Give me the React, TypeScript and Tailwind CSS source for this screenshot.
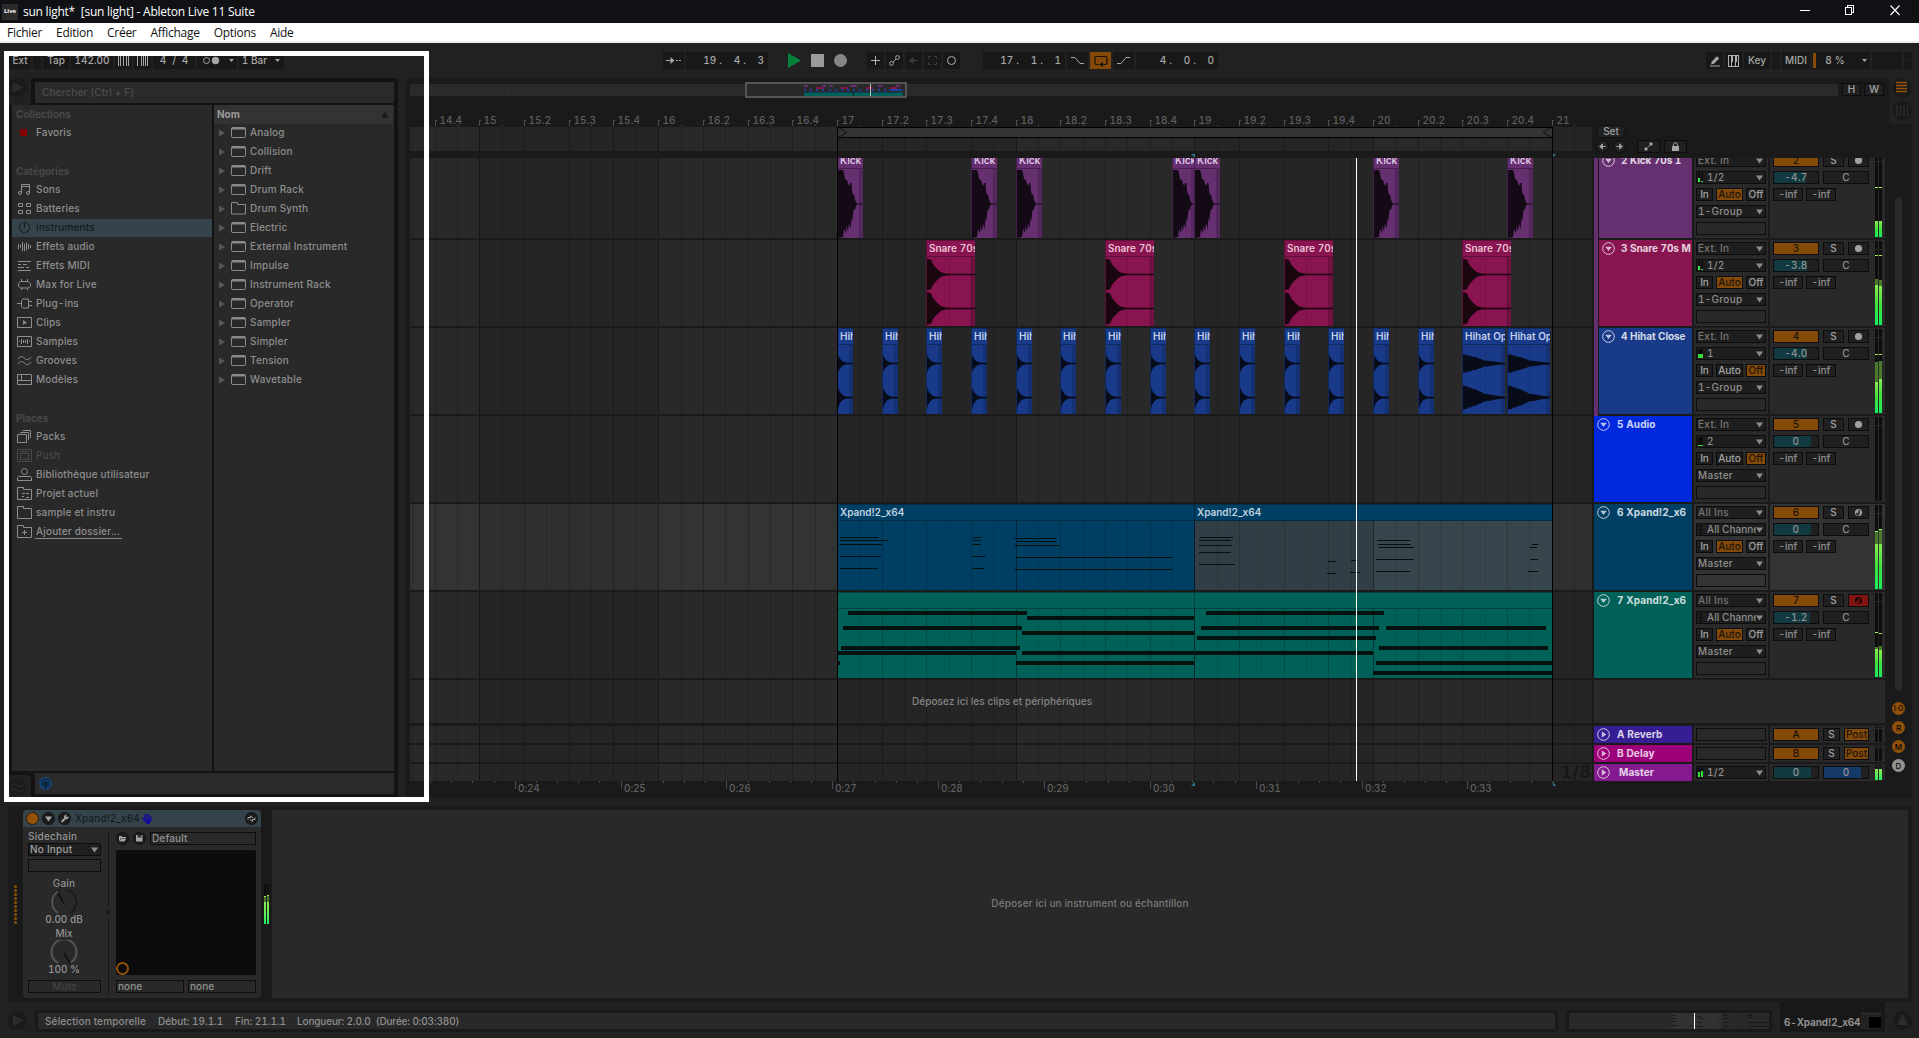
import React from "react";

/* ---------- timeline geometry (pixels inside the lane area) ---------- */
const ORIGIN = 427.4;
const BEAT = 44.68;
const beatX = (b: number) => Math.floor(ORIGIN + b * BEAT);
const LANE_W = 1182;

const halfBeats = Array.from({ length: 72 }, (_, i) => i - 19);

function GridLines({ from = 0, to = LANE_W, strong = false }: { from?: number; to?: number; strong?: boolean }) {
  return (
    <>
      {halfBeats
        .map((n) => ({ n, x: beatX(n / 2) }))
        .filter(({ x }) => x > from && x < to)
        .map(({ n, x }) => (
          <div
            key={n}
            className={`absolute top-0 bottom-0 w-px ${
              n % 8 === 0 ? "bg-black/40" : n % 2 === 0 ? (strong ? "bg-black/20" : "bg-black/25") : strong ? "bg-black/10" : "bg-black/15"
            }`}
            style={{ left: x - from }}
          />
        ))}
    </>
  );
}

function Lane({ children, selected = false, className = "" }: { children?: React.ReactNode; selected?: boolean; className?: string }) {
  return (
    <div className={`relative w-[1182px] shrink-0 overflow-hidden ${selected ? "bg-[#333333]" : "bg-[#292929]"} ${className}`}>
      {[-8, 0, 8, 16].map((b) => (
        <div
          key={b}
          className={`absolute top-0 bottom-0 ${selected ? "bg-[#2f2f2f]" : "bg-[#252525]"}`}
          style={{ left: beatX(b), width: 179 }}
        />
      ))}
      <GridLines />
      {children}
    </div>
  );
}

/* ---------- clips ---------- */
type Pt = [number, number];
const mirror = (pts: Pt[], c: number, amp = 1) =>
  [...pts.map(([x, y]) => `${x},${c - y * amp}`), ...[...pts].reverse().map(([x, y]) => `${x},${c + 0.5 + y * amp}`)].join(" ");

const KICK =
  "0,1 5,1 6,4 7,10 9,11 10,15 11.5,17 12,14 13.5,14 14,22 15,26 16,25 17,31 18,33 19,34.5 26,34.5 26,35.5 19,35.5 18,37 17,41 16,40 15,44 14.5,52 13.5,49 12.5,60 11,54 10,62 8.5,57 8,64 6,60 5,68 0,69";
const SNARE: Pt[] = [[0, 15.5], [4, 14.5], [6, 10], [8, 7.5], [11, 4.5], [14, 2], [18, 1], [22, 0.5], [49, 0.5]];
const HIHAT: Pt[] = [[0, 9.5], [1, 6], [3, 3.5], [5, 1.8], [8, 0.8], [11, 0.5], [16, 0.5]];
const OPEN: Pt[] = [[0, 9], [4, 8.5], [5, 7.5], [8, 7.5], [9, 6.5], [13, 6], [15, 5], [18, 4.2], [21, 2.8], [27, 2.2], [34, 1.2], [43, 0.5]];

type Kind = "kick" | "snare" | "hihat" | "open";
const clipBg: Record<Kind, string> = { kick: "bg-[#652f70]", snare: "bg-[#891550]", hihat: "bg-[#183a88]", open: "bg-[#183a88]" };
const clipText: Record<Kind, string> = { kick: "text-[#dcc4e2]", snare: "text-[#ecc3d6]", hihat: "text-[#c3d0ec]", open: "text-[#c3d0ec]" };
const waveFill: Record<Kind, string> = { kick: "#130a15", snare: "#1a060f", hihat: "#070c18", open: "#070c18" };

function AudioClip({ beat, width, kind, title }: { beat: number; width: number; kind: Kind; title: string }) {
  const x = beatX(beat);
  return (
    <div
      className={`absolute top-0 bottom-0 flex flex-col overflow-hidden border-t border-l border-t-black/25 border-l-black/30 ${clipBg[kind]}`}
      style={{ left: x, width }}
    >
      <div
        className={`h-[16px] shrink-0 overflow-hidden border-b border-black/30 pl-[2px] text-[10px] leading-[15px] font-semibold whitespace-nowrap ${clipText[kind]}`}
      >
        {title}
      </div>
      <div className="relative flex-1 overflow-hidden">
        <GridLines from={x + 1} to={x + width} strong />
        <div className="absolute top-0 right-0 bottom-0 w-[4px] bg-black/15" />
        <svg className="absolute top-0 left-0" width="50" height="70" fill={waveFill[kind]}>
          {kind === "kick" && <polygon points={KICK} />}
          {kind === "snare" && (
            <>
              <polygon points={mirror(SNARE, 17.3)} />
              <polygon points={mirror(SNARE, 51.3, 1.03)} />
            </>
          )}
          {kind === "hihat" && (
            <>
              <polygon points={mirror(HIHAT, 18.3)} />
              <polygon points={mirror(HIHAT, 52.3, 1.15)} />
            </>
          )}
          {kind === "open" && (
            <>
              <polygon points={mirror(OPEN, 18.3)} />
              <polygon points={mirror(OPEN, 52.3, 1.3)} />
            </>
          )}
        </svg>
      </div>
    </div>
  );
}

function MidiClip({ beat, width, header, body, title }: { beat: number; width: number; header: string; body: string; title?: string }) {
  const x = beatX(beat);
  return (
    <div className="absolute top-0 bottom-0 flex flex-col overflow-hidden border-l border-black/30" style={{ left: x, width }}>
      <div
        className={`h-[17px] shrink-0 border-t border-b border-black/30 pl-[2px] text-[10px] leading-[15px] font-semibold tracking-[-0.05px] whitespace-nowrap text-[#c0d4e0] ${header}`}
      >
        {title}
      </div>
      <div className={`relative flex-1 ${body}`}>
        <GridLines from={x + 1} to={x + width} strong />
      </div>
    </div>
  );
}

/* note lists: start, end, vertical centre */
const CHORDS = [
  [43, 123, 142], [43, 144, 151], [41, 131, 163], [43, 129, 199], [43, 123, 235],
  [325, 341, 142], [325, 341, 151], [325, 341, 163], [325, 352, 199], [325, 348, 235],
  [412, 502, 145], [417, 500, 154], [412, 506, 166], [415, 748, 202], [412, 746, 238],
  [806, 875, 142], [804, 871, 151], [804, 873, 166], [804, 871, 187], [802, 879, 223],
  [1076, 1093, 214], [1075, 1093, 250], [1126, 1140, 211], [1123, 1144, 247],
  [1181, 1250, 151], [1183, 1252, 163], [1184, 1259, 172], [1179, 1259, 208], [1179, 1250, 244],
  [1508, 1521, 163], [1505, 1519, 172], [1505, 1521, 208], [1501, 1521, 244],
];
const PADS = [
  [59, 439, 369], [439, 792, 384], [49, 428, 414], [428, 792, 429], [44, 424, 474], [37, 415, 489],
  [427, 792, 489], [415, 792, 519], [37, 42, 519], [818, 1195, 369], [807, 1184, 414], [1199, 1538, 414],
  [799, 1178, 444], [1184, 1543, 474], [795, 1172, 489], [1178, 1553, 519], [1172, 1553, 549],
];

function Notes({ notes, top, thick }: { notes: number[][]; top: number; thick: number }) {
  return (
    <svg
      className="absolute top-0 left-[427px]"
      width="716"
      height="86"
      viewBox={`36 ${top} 1517 258`}
      preserveAspectRatio="none"
      shapeRendering="crispEdges"
      fill="#03110f"
    >
      {notes.map(([a, b, y], i) => (
        <rect key={i} x={a} y={y - thick / 2} width={b - a} height={thick} />
      ))}
    </svg>
  );
}

/* ---------- small controls ---------- */
const Tri = ({ className = "" }: { className?: string }) => (
  <svg className={`shrink-0 ${className}`} width="7" height="6" viewBox="0 0 7 6">
    <path d="M0 0.5h7L3.5 5.5z" fill="#8d8d8d" />
  </svg>
);

const box = "flex h-[13px] items-center border border-[#0c0c0c] text-[10px] leading-[11px] font-medium";

function Drop({ children, meter, gray = false, tight = false }: { children: React.ReactNode; meter?: React.ReactNode; gray?: boolean; tight?: boolean }) {
  return (
    <div
      className={`${box} w-[70px] bg-[#1e1e1e] pr-[2px] pl-[1px] ${tight ? "tracking-[0.05px]" : "tracking-[0.3px]"} ${gray ? "text-[#767676]" : "text-[#8f8f8f]"}`}
    >
      {meter}
      <span className="flex-1 overflow-hidden whitespace-nowrap">{children}</span>
      <Tri />
    </div>
  );
}

const MiniMeter = ({ l, r }: { l: number; r?: number }) => (
  <span className="mr-[4px] flex h-[9px] shrink-0 items-end gap-px">
    <span className={`flex h-full items-end bg-[#0c0c0c] ${r === undefined ? "w-[5px]" : "w-[2px]"}`}>
      <span className="w-full bg-[#35e03c]" style={{ height: l }} />
    </span>
    {r !== undefined && (
      <span className="flex h-full w-[2px] items-end bg-[#0c0c0c]">
        <span className="w-full bg-[#35e03c]" style={{ height: r }} />
      </span>
    )}
  </span>
);

const MidiMeter = () => (
  <span className="mr-[5px] ml-px flex h-[9px] w-[3px] shrink-0 flex-col justify-between">
    <span className="h-[2px] bg-[#0e0e0e]" />
    <span className="h-[2px] bg-[#0e0e0e]" />
    <span className="h-[2px] bg-[#0e0e0e]" />
  </span>
);

function Fold({ open = true }: { open?: boolean }) {
  return (
    <svg className="shrink-0" width="13" height="13" viewBox="0 0 13 13">
      <circle cx="6.5" cy="6.5" r="5.8" fill="none" stroke="#fff" strokeOpacity=".75" />
      <path d={open ? "M3.2 4.8h6.6L6.5 9z" : "M4.8 3.3v6.4L9.2 6.5z"} fill="#fff" fillOpacity=".7" />
    </svg>
  );
}

interface TrackInfo {
  n: string;
  name: string;
  color: string;
  group?: boolean;
  midi?: boolean;
  input: React.ReactNode;
  meter: React.ReactNode;
  mon: "Auto" | "Off";
  out: string;
  vol: string;
  fill: number;
  armed?: boolean;
  levels: { peak: number; dim: number; top: number }[];
}

function Level({ peak, dim, top }: { peak: number; dim: number; top: number }) {
  return (
    <div className="relative h-[84px] w-[3px] bg-[#0d0d0d]">
      <div className="absolute top-[8px] h-px w-full bg-[#2a2a2a]" />
      {dim > 0 && <div className="absolute bottom-0 w-full bg-[#4a7a2c]" style={{ top: dim }} />}
      {top > 0 && <div className="absolute bottom-0 w-full bg-linear-to-b from-[#85ec50] via-[#3ae23c] to-[#0ff05c]" style={{ top }} />}
      {peak > 0 && <div className="absolute h-px w-full bg-[#a6f05a]" style={{ top: peak }} />}
    </div>
  );
}

function Track({ t, selected = false, clipTop = false, children }: { t: TrackInfo; selected?: boolean; clipTop?: boolean; children?: React.ReactNode }) {
  const panel = selected ? "bg-[#333333]" : "bg-[#292929]";
  const on = "bg-[#854a08] text-[#1d1408]";
  const off = "bg-[#1e1e1e] text-[#a4a4a4]";
  return (
    <div className={`flex h-[86px] shrink-0 gap-[2px] ${clipTop ? "-mt-[6px]" : ""}`}>
      <Lane selected={selected}>{children}</Lane>
      <div className="flex w-[98px] gap-px">
        {t.group && <div className="-mb-[2px] w-[4px] bg-[#652f70]" />}
        <div className={`flex flex-1 items-start overflow-hidden pt-[2px] pl-[3px] ${t.color}`}>
          <Fold />
          <span
            className={`text-[10px] leading-[13px] font-bold whitespace-nowrap text-white/80 ${
              t.group ? "ml-[6px] tracking-[-0.08px]" : "ml-[7px] tracking-[0.08px]"
            }`}
          >
            {t.n} {t.name}
          </span>
        </div>
      </div>
      <div className={`flex w-[74px] flex-col gap-[4px] pt-[2px] pl-[2px] ${panel}`}>
        <Drop gray>{t.midi ? "All Ins" : "Ext. In"}</Drop>
        <Drop meter={t.meter} tight={t.midi}>
          {t.input}
        </Drop>
        <div className="flex w-[70px] justify-between">
          <div className={`${box} w-[17px] justify-center ${off}`}>In</div>
          <div className={`${box} w-[27px] justify-center ${t.mon === "Auto" ? on : off}`}>Auto</div>
          <div className={`${box} w-[20px] justify-center ${t.mon === "Off" ? on : off}`}>Off</div>
        </div>
        <Drop>{t.out}</Drop>
        <div className={`${box} w-[70px]`} />
      </div>
      <div className={`flex w-[115px] pl-[3px] ${panel}`}>
        <div className="flex w-[96px] flex-col gap-[4px] pt-[2px] text-[#929292]">
          <div className="flex gap-[4px]">
            <div className={`${box} w-[46px] justify-center ${on}`}>{t.n}</div>
            <div className={`${box} w-[21px] justify-center bg-[#202020] text-[#a4a4a4]`}>S</div>
            <div className={`${box} w-[21px] justify-center ${t.armed ? "bg-[#821313]" : "bg-[#202020]"}`}>
              <svg width="9" height="9" viewBox="0 0 9 9">
                <circle cx="4.5" cy="4.5" r="3.6" fill={t.armed ? "#1a0606" : "#a0a0a0"} />
                {t.midi && (
                  <path d="M5.2 2v4M5 6.2a1.2 1 0 1 1-.2-.8" stroke={t.armed ? "#821313" : "#202020"} strokeWidth="1.2" fill="none" />
                )}
              </svg>
            </div>
          </div>
          <div className="flex gap-[4px]">
            <div className={`${box} relative w-[46px] justify-center bg-[#202020]`}>
              <div className="absolute inset-y-0 left-0 bg-[#113a40]" style={{ width: t.fill }} />
              <span className="relative tracking-[0.3px]">{t.vol}</span>
            </div>
            <div className={`${box} w-[46px] justify-center bg-[#202020]`}>C</div>
          </div>
          <div className="flex gap-[3px]">
            <div className={`${box} w-[30px] justify-center bg-[#202020]`}>-inf</div>
            <div className={`${box} w-[30px] justify-center bg-[#202020]`}>-inf</div>
          </div>
        </div>
        <div className="ml-[6px] flex gap-px pt-px">
          {t.levels.map((l, i) => (
            <Level key={i} {...l} />
          ))}
        </div>
      </div>
    </div>
  );
}

function ReturnRow({ label, name, color, master = false }: { label?: string; name: string; color: string; master?: boolean }) {
  return (
    <div className="flex h-[17px] shrink-0 gap-[2px]">
      <Lane>
        {master && (
          <span className="absolute -top-[2px] right-[1px] text-[17px] leading-[20px] font-bold tracking-[0.5px] text-[#171717]">1/8</span>
        )}
      </Lane>
      <div className={`flex w-[98px] items-center pl-[3px] ${color}`}>
        <Fold open={false} />
        <span className={`text-[10px] font-bold tracking-[0.1px] whitespace-nowrap text-white/80 ${master ? "ml-[9px]" : "ml-[7px]"}`}>{name}</span>
      </div>
      <div className="flex w-[74px] items-center bg-[#292929] pl-[2px]">
        {master ? <Drop meter={<MiniMeter l={5} r={6} />}>1/2</Drop> : <div className={`${box} w-[70px]`} />}
      </div>
      <div className="flex w-[115px] items-center bg-[#292929] pl-[3px]">
        {master ? (
          <div className="flex w-[102px] gap-[4px] text-[#929292]">
            <div className={`${box} relative w-[46px] justify-center bg-[#202020]`}>
              <div className="absolute inset-y-0 left-0 w-[37px] bg-[#113a40]" />
              <span className="relative">0</span>
            </div>
            <div className={`${box} relative w-[46px] justify-center bg-[#202020]`}>
              <div className="absolute inset-y-0 left-0 w-[37px] bg-[#163a68]" />
              <span className="relative">0</span>
            </div>
          </div>
        ) : (
          <div className="flex w-[102px] gap-[4px]">
            <div className={`${box} w-[46px] justify-center bg-[#854a08] text-[#1d1408]`}>{label}</div>
            <div className={`${box} w-[17px] justify-center bg-[#202020] text-[#a4a4a4]`}>S</div>
            <div className={`${box} w-[25px] justify-center overflow-hidden bg-[#854a08] text-[#1d1408]`}>Post</div>
          </div>
        )}
        <div className="flex h-[15px] gap-px">
          {[0, 1].map((i) => (
            <div key={i} className="relative w-[3px] bg-[#0d0d0d]">
              <div className="absolute top-px h-px w-full bg-[#2a2a2a]" />
              {master && <div className="absolute bottom-0 h-[11px] w-full bg-linear-to-b from-[#85ec50] to-[#0ff05c]" />}
            </div>
          ))}
        </div>
      </div>
    </div>
  );
}

/* ---------- top bars ---------- */
const cell = "flex h-[17px] shrink-0 items-center justify-center bg-[#181818] text-[10px] font-medium text-[#a6a6a6]";

function TitleBar() {
  return (
    <div className="flex h-[23px] items-center bg-[#0f1115] text-white">
      <div className="ml-[2px] flex h-[16px] w-[16px] items-center justify-center bg-[#2b2b2b] font-['Open_Sans'] text-[6px] font-bold">Live</div>
      <span className="ml-[5px] font-['Open_Sans'] text-[12px] leading-[23px] tracking-[-0.24px] whitespace-pre">
        {"sun light*  [sun light] - Ableton Live 11 Suite"}
      </span>
      <svg className="ml-auto" width="130" height="23" fill="none" stroke="#fff" shapeRendering="crispEdges">
        <path d="M10.500 10.500h10" />
        <path d="M56.500 7.500h6v7h-6zM58.500 7V5.500h6v7h-2" />
        <path d="M101.500 5.500l9 9.500M110.500 5.500l-9 9.500" shapeRendering="auto" strokeWidth="1.100" />
      </svg>
    </div>
  );
}

function MenuBar() {
  return (
    <div className="flex h-[20px] items-center gap-[14px] border-b-2 border-[#eeeeee] bg-white pl-[7px] font-['Open_Sans'] text-[12px] tracking-[-0.28px] text-[#111]">
      {["Fichier", "Edition", "Créer", "Affichage", "Options", "Aide"].map((m) => (
        <span key={m} className="pt-px">
          {m}
        </span>
      ))}
    </div>
  );
}

const Pos = ({ a, b, c }: { a: string; b: string; c: string }) => (
  <div className={`${cell} w-[82px] !justify-end pr-[4px] tracking-[0.1px]`}>
    <span className="whitespace-pre">{a} .</span>
    <span className="w-[24px] text-right whitespace-pre">{b} .</span>
    <span className="w-[18px] text-right">{c}</span>
  </div>
);

function Toolbar() {
  return (
    <div className="flex h-[35px] items-start pt-[9px]">
      <div className="flex gap-[2px] pl-[9px]">
        <div className={`${cell} w-[22px]`}>Ext</div>
        <div className={`${cell} w-[8px]`} />
        <div className={`${cell} w-[26px]`}>Tap</div>
        <div className={`${cell} w-[42px]`}>142.00</div>
        <div className={`${cell} w-[17px]`}>
          <svg width="11" height="11" stroke="#a6a6a6" shapeRendering="crispEdges">
            <path d="M.5 0v11M2.500 0v11M5.500 0v11M8.500 0v11M10.500 0v11" />
          </svg>
        </div>
        <div className={`${cell} w-[17px]`}>
          <svg width="11" height="11" stroke="#a6a6a6" shapeRendering="crispEdges">
            <path d="M.5 0v11M4.500 0v11M6.500 0v11M8.500 0v11M10.500 0v11" />
          </svg>
        </div>
        <div className={`${cell} w-[42px] gap-[6px]`}>
          <span>4</span>
          <span>/</span>
          <span>4</span>
        </div>
        <div className={`${cell} w-[40px] !justify-start pl-[5px]`}>
          <svg width="34" height="9">
            <circle cx="4.500" cy="4.500" r="3" fill="none" stroke="#a6a6a6" />
            <circle cx="13.500" cy="4.500" r="3.700" fill="#a6a6a6" />
            <path d="M27 3h5l-2.500 3z" fill="#a6a6a6" />
          </svg>
        </div>
        <div className={`${cell} w-[45px] gap-[8px]`}>
          <span>1 Bar</span>
          <svg width="6" height="4">
            <path d="M0 0h5L2.500 3z" fill="#a6a6a6" />
          </svg>
        </div>
      </div>

      <div className="ml-[379px] flex gap-[2px]">
        <div className={`${cell} w-[21px]`}>
          <svg width="15" height="9" stroke="#a6a6a6" fill="#a6a6a6">
            <path d="M0 4.500h8M10 4.500h2M13 4.500h2" />
            <path d="M4.500 1v7l4-3.500z" stroke="none" />
          </svg>
        </div>
        <Pos a="19" b="4" c="3" />
        <svg className="ml-[17px]" width="66" height="17">
          <path d="M1 1v15l13-7.500z" fill="#07803c" />
          <rect x="24" y="2" width="13" height="13" fill="#9b9b9b" />
          <circle cx="53.500" cy="8.500" r="6.500" fill="#868686" />
        </svg>
        <div className={`${cell} ml-[12px] w-[17px]`}>
          <svg width="9" height="9" stroke="#b0b0b0" shapeRendering="crispEdges">
            <path d="M4.500 0v9M0 4.500h9" />
          </svg>
        </div>
        <div className={`${cell} w-[17px]`}>
          <svg width="11" height="11" stroke="#a6a6a6" fill="none">
            <circle cx="2.500" cy="8.500" r="1.900" />
            <circle cx="8.500" cy="2.500" r="1.900" />
            <path d="M4 7l3-3" />
          </svg>
        </div>
        <div className={`${cell} w-[17px]`}>
          <svg width="9" height="9" stroke="#3e3e3e" fill="#3e3e3e">
            <path d="M0 4.500L4.500 1v7z" stroke="none" />
            <path d="M3 4.500h6" />
          </svg>
        </div>
        <div className={`${cell} w-[17px]`}>
          <svg width="9" height="9" stroke="#3e3e3e" fill="none">
            <path d="M.5 3V.5H3M6 .5h2.500V3M8.500 6v2.500H6M3 8.500H.5V6" />
          </svg>
        </div>
        <div className={`${cell} w-[17px]`}>
          <svg width="11" height="11" stroke="#b0b0b0" fill="none">
            <circle cx="5.500" cy="5.500" r="4" />
          </svg>
        </div>
        <div className="w-[19px]" />
        <Pos a="17" b="1" c="1" />
        <div className={`${cell} w-[21px]`}>
          <svg width="13" height="9" stroke="#a6a6a6" fill="none">
            <path d="M0 1.500h4l5 6h4" />
          </svg>
        </div>
        <div className={`${cell} w-[21px] !bg-[#854a08]`}>
          <svg width="14" height="12" stroke="#1a1208" fill="none" strokeWidth="1.200">
            <path d="M4.500 9.500H2.500a1.500 1.500 0 0 1-1.500-1.500V3a1.500 1.500 0 0 1 1.500-1.500h9A1.500 1.500 0 0 1 13 3v5a1.500 1.500 0 0 1-1.500 1.500H8" />
            <path d="M5 9.500L9 7v5z" fill="#1a1208" stroke="none" />
          </svg>
        </div>
        <div className={`${cell} w-[21px]`}>
          <svg width="13" height="9" stroke="#a6a6a6" fill="none">
            <path d="M0 7.500h4l5-6h4" />
          </svg>
        </div>
        <Pos a="4" b="0" c="0" />
      </div>

      <div className="ml-[488px] flex gap-[2px]">
        <div className={`${cell} w-[17px]`}>
          <svg width="12" height="12" fill="#a6a6a6">
            <path d="M2 9.500l.8-3L8 1.200 10.200 3.400 5 8.700z" />
            <rect x="1" y="10.500" width="10" height="1" />
          </svg>
        </div>
        <div className={`${cell} w-[17px]`}>
          <svg width="11" height="12" shapeRendering="crispEdges">
            <rect x=".5" y=".5" width="10" height="11" fill="none" stroke="#b0b0b0" />
            <path d="M3.500 7v4M7.500 7v4" stroke="#b0b0b0" />
            <path d="M3.500 1v6M7.500 1v6" stroke="#b0b0b0" strokeWidth="2" />
          </svg>
        </div>
        <div className={`${cell} w-[26px]`}>Key</div>
        <div className="flex h-[17px] w-[8px] flex-col gap-px">
          <div className="flex-1 bg-[#181818]" />
          <div className="flex-1 bg-[#181818]" />
        </div>
        <div className={`${cell} w-[28px]`}>MIDI</div>
        <div className={`${cell} relative w-[58px]`}>
          <div className="absolute inset-y-px left-px w-[3px] bg-[#854a08]" />
          <span className="mr-[12px] tracking-[0.2px]">8 %</span>
          <svg className="absolute right-[2px]" width="6" height="4">
            <path d="M0 0h5L2.500 3z" fill="#a6a6a6" />
          </svg>
        </div>
        <div className={`${cell} w-[30px]`} />
        <div className="flex h-[17px] w-[8px] flex-col gap-px">
          <div className="flex-1 bg-[#181818]" />
          <div className="flex-1 bg-[#181818]" />
        </div>
      </div>
    </div>
  );
}

/* ---------- browser ---------- */
const icons: Record<string, React.ReactNode> = {
  Sons: <path d="M4.500 10V1.500h8V10M4.500 3.500h8M4.500 10a1.500 1.500 0 1 1-3 0 1.500 1.500 0 0 1 3 0zM12.500 10a1.500 1.500 0 1 1-3 0 1.500 1.500 0 0 1 3 0z" />,
  Batteries: <path d="M1.500 1.500h4v3h-4zM9.500 1.500h4v3h-4zM1.500 8.500h4v3h-4zM9.500 8.500h4v3h-4z" />,
  Instruments: <path d="M7.500 1v5.500M7.500 1.500a5 5 0 1 1-.01 0" />,
  "Effets audio": <path d="M1.500 4v5M3.500 4.500v3M5.500 2v9M7.500 4v7M9.500 2.500v8M11.500 4v5M13.500 5v3" />,
  "Effets MIDI": <path d="M1 2.500h13M1 5.500h3M6 5.500h4M1 8.500h6M9 8.500h3M1 11.500h13" />,
  "Max for Live": <path d="M1 6.500h1M13 6.500h1M4.500 1v2M10.500 1v2M4.500 10v2M10.500 10v2M3.500 3.500h8l2 2v2.500l-2 2h-8l-2-2V5.500z" />,
  "Plug-ins": <path d="M0 6.500h4M4.500 3.500l1.500-1.500h5.500v9H6L4.500 9.500zM11.500 4.500H15M11.500 8.500H15" />,
  Clips: (
    <>
      <path d="M.5 1.500h14v10H.5z" />
      <path d="M6 4v5l4-2.500z" fill="#8a8a8a" stroke="none" />
    </>
  ),
  Samples: <path d="M.5 1.500h14v10H.5zM2.500 6v1M4.500 4v5M6.500 5v3M8.500 5v3M10.500 4v5M12.500 6v1" />,
  Grooves: <path d="M1 5c2-3 4-3 6.500-.8S12 6 14 3M1 10c2-3 4-3 6.500-.8S12 11 14 8" />,
  Modèles: <path d="M.5 1.500h14v10H.5zM.5 7.500h14M4.500 1.500v6" />,
  Packs: <path d="M.5 4.500h9v8h-9zM3 2.500h8.500V10M5.500.5h8V8" />,
  Push: <path d="M.5.5h14v12H.5zM3 2.500h9M3.500 4.500h8v6h-8z" />,
  "Bibliothèque utilisateur": <path d="M7.500 .5a3 3 0 1 1-.01 0M.5 12.500v-3l1-1h12l1 1v3z" />,
  "Projet actuel": <path d="M.5 12.500V.5h6v2h8v10zM5 6.500h3M9 6.500h3M5 9.500h2M9 10.500h3" />,
  "sample et instru": <path d="M.5 12.500V.5h6v2h8v10z" />,
  "Ajouter dossier...": <path d="M.5 12.500V.5h6v2h8v10zM7.500 5v5M5 7.500h5" />,
};

function Category({ name, state = "" }: { name: string; state?: "" | "on" | "off" | "link" }) {
  const color = state === "on" ? "text-[#151c20]" : state === "off" ? "text-[#484848]" : "text-[#8e8e8e]";
  return (
    <div className="flex h-[19px] items-start">
      <div className={`flex h-[18px] w-full items-start pt-[2px] pl-[5px] ${state === "on" ? "bg-[#35444b]" : ""} ${color}`}>
        <svg width="15" height="13" fill="none" stroke="currentColor">
          {icons[name]}
        </svg>
        <span
          className={`ml-[3px] pl-px text-[10px] leading-[13px] font-medium tracking-[0.17px] ${
            state === "link" ? "h-[14px] border-b border-[#8a8a8a] pr-[2px]" : ""
          }`}
        >
          {name}
        </span>
      </div>
    </div>
  );
}

const Heading = ({ children }: { children: React.ReactNode }) => (
  <div className="flex h-[19px] items-start pt-[2px] pl-[4px] text-[10px] leading-[14px] font-semibold tracking-[0.05px] text-[#4a4a4a]">
    {children}
  </div>
);

const instruments = [
  "Analog", "Collision", "Drift", "Drum Rack", "Drum Synth", "Electric", "External Instrument", "Impulse",
  "Instrument Rack", "Operator", "Sampler", "Simpler", "Tension", "Wavetable",
];

function Browser() {
  return (
    <div className="flex h-[720px] w-[389px] flex-col rounded-tr-[4px] bg-[#131313]">
      <div className="flex h-[27px]">
        <div className="flex w-[22px] items-start rounded-br-[4px] bg-[#212121]">
          <svg className="-ml-[1px]" width="20" height="20">
            <circle cx="9" cy="9.500" r="9.500" fill="#1a1a1a" />
            <path d="M4.500 4v11l11-5.500z" fill="#2b2b2b" />
          </svg>
        </div>
        <div className="mt-[4px] ml-[4px] flex h-[21px] w-[359px] items-center bg-[#2a2a2a] pl-[7px] text-[10px] leading-[13px] font-medium tracking-[0.12px] text-[#4d4d4d]">
          Chercher (Ctrl + F)
        </div>
      </div>
      <div className="flex h-[666px] gap-[2px] pl-[3px]">
        <div className="flex w-[200px] flex-col bg-[#292929]">
          <Heading>Collections</Heading>
          <div className="flex h-[19px] items-start pt-[2px] pl-[8px] text-[10px] leading-[13px] font-medium tracking-[0.1px] text-[#8e8e8e]">
            <span className="mt-[3px] mr-[9px] h-[7px] w-[7px] bg-[#850303]" />
            Favoris
          </div>
          <div className="h-[19px]" />
          <Heading>Catégories</Heading>
          {["Sons", "Batteries", "Instruments", "Effets audio", "Effets MIDI", "Max for Live", "Plug-ins", "Clips", "Samples", "Grooves", "Modèles"].map(
            (n) => (
              <Category key={n} name={n} state={n === "Instruments" ? "on" : ""} />
            ),
          )}
          <div className="h-[19px]" />
          <Heading>Places</Heading>
          <Category name="Packs" />
          <Category name="Push" state="off" />
          <Category name="Bibliothèque utilisateur" />
          <Category name="Projet actuel" />
          <Category name="sample et instru" />
          <Category name="Ajouter dossier..." state="link" />
        </div>
        <div className="flex w-[180px] flex-col bg-[#292929]">
          <div className="flex h-[19px] w-[179px] items-center justify-between bg-[#333333] pr-[4px] pl-[3px] text-[10px] font-bold text-[#9b9b9b]">
            Nom
            <svg width="8" height="7">
              <path d="M0 7h8L4 0z" fill="#1c1c1c" />
            </svg>
          </div>
          {instruments.map((n) => (
            <div key={n} className="flex h-[19px] items-start pt-[2px] pl-[5px] text-[10px] leading-[13px] font-medium tracking-[0.2px] text-[#8e8e8e]">
              <svg className="mt-[3px]" width="6" height="8">
                <path d="M0 .5v7l6-3.500z" fill="#565656" />
              </svg>
              <svg className="ml-[6px]" width="15" height="13" fill="none" stroke="#8a8a8a">
                {n === "Drum Synth" ? (
                  <path d="M.5 12V.5h6v2h8V12z" />
                ) : (
                  <>
                    <rect x=".5" y="1.500" width="14" height="10" rx="1" />
                    <path d="M1 2.500h13" strokeWidth="2" />
                  </>
                )}
              </svg>
              <span className="ml-[4px]">{n}</span>
            </div>
          ))}
        </div>
      </div>
      <div className="flex h-[27px]">
        <div className="mt-[4px] flex w-[22px] items-center rounded-tr-[4px] bg-[#212121]">
          <svg className="-ml-[1px]" width="20" height="20">
            <circle cx="9" cy="10.500" r="9" fill="#1b1b1b" />
            <path d="M3 9c2-3 4-2 6-.5s4 2 6-.5M3 14c2-3 4-2 6-.5s4 2 6-.5" fill="none" stroke="#292929" strokeWidth="1.500" />
          </svg>
        </div>
        <div className="mt-[2px] ml-[4px] flex h-[21px] w-[359px] items-center bg-[#2a2a2a] pl-[4px]">
          <svg width="13" height="13">
            <circle cx="6.500" cy="6.500" r="6.500" fill="#134272" />
            <circle cx="6.500" cy="6" r="4" fill="none" stroke="#0c1d30" />
            <path d="M6.500 5v7M5 5h3v3H5z" stroke="#0c1d30" fill="#0c1d30" />
          </svg>
        </div>
      </div>
    </div>
  );
}

/* ---------- arrangement ---------- */
const rulerBeats = Array.from({ length: 26 }, (_, i) => i - 9);
const beatLabel = (b: number) => {
  const bar = 17 + Math.floor(b / 4);
  const beat = ((b % 4) + 4) % 4;
  return beat === 0 ? `${bar}` : `${bar}.${beat + 1}`;
};

function Overview() {
  const s = 6.15;
  return (
    <div className="relative mt-[6px] ml-[4px] h-[12px] w-[1428px] bg-[#2a2a2a]">
      <div className="absolute top-[8px] left-[98px] h-[2px] w-px bg-[#0b4a78]" />
      <div className="absolute -top-[2px] left-[335px] h-[16px] w-[162px] border-2 border-[#555555] bg-[#292929]">
        <svg className="absolute top-0 left-[57px]" width="100" height="12" shapeRendering="crispEdges">
          {[0, 3, 4, 7.5, 8, 12, 15].map((b) => (
            <rect key={b} x={b * s} y="1" width="4" height="2" fill="#652f70" />
          ))}
          {[2, 6, 10, 14].map((b) => (
            <rect key={b} x={b * s} y="3" width="7" height="2" fill="#891550" />
          ))}
          {Array.from({ length: 16 }, (_, b) => (
            <rect key={b} x={b * s} y="5" width={b > 13 ? 6 : 2} height="2" fill="#1c43a0" />
          ))}
          <rect x="0" y="8" width="99" height="2" fill="#0a3f5c" />
          <rect x="0" y="9" width="99" height="3" fill="#006158" />
          <rect x="49" y="7" width="1" height="5" fill="#072a2c" />
          <rect x="66" y="0" width="1" height="12" fill="#c0c0c0" />
        </svg>
      </div>
    </div>
  );
}

function Ruler() {
  return (
    <div className="relative ml-[4px] h-[31px] w-[1182px]">
      {rulerBeats.map((b) => (
        <React.Fragment key={b}>
          <div className="absolute top-[24px] h-[6px] w-[2px] border-t border-l border-[#4e4e4e]" style={{ left: beatX(b) }} />
          <div className="absolute top-[29px] h-px w-px bg-[#4e4e4e]" style={{ left: beatX(b + 0.5) }} />
          <span className="absolute top-[18px] text-[10px] leading-[13px] font-medium tracking-[0.1px] text-[#5f5f5f]" style={{ left: beatX(b) + 4.5 }}>
            {beatLabel(b)}
          </span>
        </React.Fragment>
      ))}
    </div>
  );
}

const tracks: TrackInfo[] = [
  { n: "2", name: "Kick 70s 1", color: "bg-[#652f70]", group: true, input: "1/2", meter: <MiniMeter l={4} r={1} />, mon: "Auto", out: "1-Group", vol: "-4.7", fill: 32, levels: [{ peak: 34, dim: 0, top: 68 }, { peak: 34, dim: 0, top: 68 }] },
  { n: "3", name: "Snare 70s M", color: "bg-[#891550]", group: true, input: "1/2", meter: <MiniMeter l={4} r={1} />, mon: "Auto", out: "1-Group", vol: "-3.8", fill: 33, levels: [{ peak: 14, dim: 38, top: 44 }, { peak: 14, dim: 39, top: 45 }] },
  { n: "4", name: "Hihat Close", color: "bg-[#183a88]", group: true, input: "1", meter: <MiniMeter l={4} />, mon: "Off", out: "1-Group", vol: "-4.0", fill: 33, levels: [{ peak: 25, dim: 33, top: 53 }, { peak: 25, dim: 32, top: 50 }] },
  { n: "5", name: "Audio", color: "bg-[#0029dd]", input: "2", meter: <MiniMeter l={1} />, mon: "Off", out: "Master", vol: "0", fill: 37, levels: [{ peak: 0, dim: 0, top: 0 }, { peak: 0, dim: 0, top: 0 }] },
  { n: "6", name: "Xpand!2_x6", color: "bg-[#003f64]", midi: true, input: "All Channe", meter: <MidiMeter />, mon: "Auto", out: "Master", vol: "0", fill: 37, levels: [{ peak: 26, dim: 27, top: 39 }, { peak: 24, dim: 25, top: 39 }] },
  { n: "7", name: "Xpand!2_x6", color: "bg-[#006158]", midi: true, armed: true, input: "All Channe", meter: <MidiMeter />, mon: "Auto", out: "Master", vol: "-1.2", fill: 36, levels: [{ peak: 39, dim: 54, top: 56 }, { peak: 40, dim: 53, top: 57 }] },
];

function Arrangement() {
  const roundBtn = "flex h-[13px] w-[13px] items-center justify-center rounded-full text-[8px] leading-none font-semibold";
  return (
    <div className="relative flex h-[720px] w-[1506px] shrink-0 flex-col rounded-[4px] bg-[#1a1a1a]">
      <div className="flex h-[18px]">
        <Overview />
        <div className="mt-[5px] ml-[4px] flex gap-[3px] text-[#999]">
          <div className={`${box} w-[19px] justify-center bg-[#202020] !font-semibold`}>H</div>
          <div className={`${box} w-[20px] justify-center bg-[#202020] !font-semibold`}>W</div>
        </div>
      </div>
      <div className="absolute top-0 right-0 flex h-[46px] w-[23px] flex-col items-end rounded-bl-[4px] bg-[#212121]">
        <svg width="20" height="42">
          <circle cx="10" cy="10" r="9.500" fill="#191919" />
          <path d="M4 4.500h11M4 7.500h11M4 10.500h11M4 13.500h11" stroke="#96560f" strokeWidth="1.500" />
          <circle cx="10" cy="32.500" r="9.500" fill="#191919" />
          <path d="M5 27v11M8.500 27v11M12 27v11M15.500 27v11" stroke="#2b2b2b" strokeWidth="1.500" />
        </svg>
      </div>
      <Ruler />

      <div className="relative ml-[4px] h-[671px] w-[1475px]">
        <div className="flex h-[24px] gap-[2px]">
          <Lane className="h-[24px]">
            <div className="absolute top-0 left-[427px] flex h-[11px] w-[716px] items-center justify-between border border-black bg-[#343434]">
              <svg width="10" height="9" fill="none" stroke="#111">
                <path d="M1 0l8 4.500L1 9" />
              </svg>
              <svg width="10" height="9" fill="none" stroke="#111">
                <path d="M9 0L1 4.500 9 9" />
              </svg>
            </div>
          </Lane>
          <div className="flex w-[293px] flex-col gap-[2px] pl-[2px]">
            <div className="-mt-[2px] flex h-[13px] w-[30px] shrink-0 items-center justify-center rounded-full border border-[#0f0f0f] bg-[#222] text-[10px] font-medium text-[#a0a0a0]">
              Set
            </div>
            <div className="flex h-[13px] shrink-0 items-center">
              {["M11 6.500H3M6.500 3L3 6.500 6.500 10z", "M2 6.500h8M6.500 3L10 6.500 6.500 10z"].map((d, i) => (
                <svg key={i} className="mr-[4px]" width="13" height="13">
                  <circle cx="6.500" cy="6.500" r="6" fill="#222" stroke="#0f0f0f" />
                  <path d={d} fill="#a6a6a6" stroke="#a6a6a6" strokeWidth="1.200" transform="translate(1.600 1.600) scale(.75)" />
                </svg>
              ))}
              <div className={`${box} ml-[7px] w-[23px] justify-center bg-[#202020]`}>
                <svg width="9" height="9" stroke="#a6a6a6" fill="#a6a6a6">
                  <circle cx="2" cy="7" r="1.200" />
                  <circle cx="7" cy="2" r="1.200" />
                  <path d="M2 7l5-5" strokeDasharray="2 1" />
                </svg>
              </div>
              <div className={`${box} ml-[4px] w-[23px] justify-center bg-[#202020]`}>
                <svg width="9" height="9" fill="#a6a6a6">
                  <rect x="1" y="4" width="7" height="5" />
                  <path d="M2.500 4V2.800a2 2 0 0 1 4 0V4" fill="none" stroke="#a6a6a6" />
                </svg>
              </div>
            </div>
          </div>
        </div>

        <div className="pt-[7px]">
          <div className="flex h-[565px] flex-col gap-[2px] overflow-hidden">
            <Track t={tracks[0]} clipTop>
              {[0, 3, 4, 7.5, 8, 12, 15].map((b) => (
                <AudioClip key={b} beat={b} width={b === 7.5 ? 23 : 26} kind="kick" title="Kick" />
              ))}
            </Track>
            <Track t={tracks[1]}>
              {[2, 6, 10, 14].map((b) => (
                <AudioClip key={b} beat={b} width={49} kind="snare" title="Snare 70s" />
              ))}
            </Track>
            <Track t={tracks[2]}>
              {Array.from({ length: 14 }, (_, b) => (
                <AudioClip key={b} beat={b} width={16} kind="hihat" title="Hihat" />
              ))}
              {[14, 15].map((b) => (
                <AudioClip key={b} beat={b} width={43} kind="open" title="Hihat Op" />
              ))}
            </Track>
            <Track t={tracks[3]} />
            <Track t={tracks[4]} selected>
              <MidiClip beat={0} width={358} header="bg-[#003f64]" body="bg-[#003f64]" title="Xpand!2_x64" />
              <MidiClip beat={8} width={358} header="bg-[#003f64]" body="bg-linear-to-r from-[#313e46] from-50% to-[#37464d] to-50%" title="Xpand!2_x64" />
              <Notes notes={CHORDS} top={42} thick={3} />
            </Track>
            <Track t={tracks[5]}>
              <MidiClip beat={0} width={358} header="bg-[#006158]" body="bg-[#006158]" />
              <MidiClip beat={8} width={358} header="bg-[#006158]" body="bg-[#006158]" />
              <Notes notes={PADS} top={306} thick={12} />
            </Track>
            <div className="flex gap-[2px]">
              <Lane className="h-[43px]">
                <span className="absolute top-[15px] left-[502px] text-[10px] leading-[13px] font-medium tracking-[0.05px] whitespace-nowrap text-[#858585]">
                  Déposez ici les clips et périphériques
                </span>
              </Lane>
              <div className="w-[291px] bg-[#292929]" />
            </div>
          </div>
          <div className="mt-[3px] flex flex-col gap-[2px]">
            <ReturnRow label="A" name="A Reverb" color="bg-[#371d93]" />
            <ReturnRow label="B" name="B Delay" color="bg-[#9c0079]" />
            <ReturnRow name="Master" color="bg-[#851a90]" master />
          </div>
        </div>

        <div className="relative h-[16px] w-[1182px]">
          {Array.from({ length: 56 }, (_, i) => i - 20).map((i) => {
            const x = Math.round(422.3 + i * 21.17);
            if (x < 0 || x > 1160) return null;
            const major = i % 5 === 0;
            return (
              <React.Fragment key={i}>
                <div className={`absolute top-0 w-px bg-[#4a4a4a] ${major ? "h-[8px]" : "h-[2px]"}`} style={{ left: x }} />
                {major && (
                  <span className="absolute top-[1px] text-[10px] leading-[13px] font-medium tracking-[-0.1px] text-[#5f5f5f]" style={{ left: x + 3 }}>
                    0:{27 + i / 5}
                  </span>
                )}
              </React.Fragment>
            );
          })}
        </div>

        <div className="absolute top-0 left-[427px] h-[654px] w-px bg-black" />
        <div className="absolute top-0 left-[1142px] h-[654px] w-px bg-black" />
        <div className="absolute top-[31px] left-[946px] h-[623px] w-px bg-white" />
        <svg className="absolute top-[27px] left-[780px]" width="370" height="632" fill="#2b7a8c">
          <path d="M1 0h4v4zM363 0h3l-3 3zM5 628v4H1zM363 628v4h3z" />
        </svg>
      </div>

      <div className="absolute top-[119px] right-[10px] h-[494px] w-[7px] rounded-full bg-[#292929]" />
      <div className="absolute top-[624px] right-[7px] flex flex-col gap-[6px]">
        <div className={`${roundBtn} bg-[#8f500a] !text-[7px] text-[#1a1208]`}>I·O</div>
        <div className={`${roundBtn} bg-[#8f500a] text-[#1a1208]`}>R</div>
        <div className={`${roundBtn} bg-[#8f500a] text-[#1a1208]`}>M</div>
        <div className={`${roundBtn} bg-[#929292] text-[#1a1a1a]`}>D</div>
      </div>
    </div>
  );
}

/* ---------- device view ---------- */
const RoundIcon = ({ children, className = "" }: { children: React.ReactNode; className?: string }) => (
  <svg className={`shrink-0 ${className}`} width="13" height="13">
    <circle cx="6.500" cy="6.500" r="6.200" fill="#1b1b1b" stroke="#111" strokeWidth=".6" />
    {children}
  </svg>
);

function Knob({ arc, needle }: { arc: "half" | "full"; needle: string }) {
  return (
    <svg width="28" height="26" fill="none">
      <path d="M8 22.800A12.500 12.500 0 1 1 20 22.800" stroke={arc === "full" ? "#555" : "#1b1b1b"} strokeWidth="2" />
      {arc === "half" && <path d="M8 22.800A12.500 12.500 0 0 1 8 1.500" stroke="#555" strokeWidth="2" />}
      <path d={needle} stroke="#111" strokeWidth="1.800" />
    </svg>
  );
}

function DeviceView() {
  return (
    <div className="mt-[8px] ml-[8px] flex h-[196px] w-[1904px] rounded-[4px] bg-[#1a1a1a] py-[4px]">
      <div className="flex w-[15px] flex-col items-end justify-center gap-px pr-[6px]">
        {Array.from({ length: 10 }, (_, i) => (
          <div key={i} className="h-[3px] w-[3px] rounded-full bg-[#8f500a]" />
        ))}
      </div>
      <div className="flex w-[238px] flex-col overflow-hidden rounded-[4px] bg-[#292929] text-[10px] font-medium text-[#929292]">
        <div className="flex h-[17px] items-center bg-[#35444b] pl-[3px]">
          <svg width="13" height="13">
            <circle cx="6.500" cy="6.500" r="6" fill="#925208" stroke="#2a1a08" />
          </svg>
          <RoundIcon className="ml-[3px]">
            <path d="M3 4.500h7l-3.500 5z" fill="#a6a6a6" />
          </RoundIcon>
          <RoundIcon className="ml-[3px]">
            <path d="M3.500 10L7 6.500" stroke="#a6a6a6" strokeWidth="1.800" />
            <path d="M6 5a2.500 2.500 0 0 1 3-2.500L7.800 4l1.200 1.200L10.500 4A2.500 2.500 0 0 1 7 7z" fill="#a6a6a6" />
          </RoundIcon>
          <span className="ml-[4px] tracking-[0.1px] text-[#151c20]">Xpand!2_x64</span>
          <svg className="ml-[2px]" width="10" height="12" fill="none" stroke="#120c98" strokeWidth="1.400" strokeLinecap="round">
            <path d="M3 6V2M5 5V1M7 6V2M9 7V4M1 5l2 3" />
            <path d="M2.500 6h6.500v2.500L7.500 11H4.500z" fill="#120c98" stroke="none" />
          </svg>
          <RoundIcon className="mr-[3px] ml-auto">
            <path d="M3 7.500V5.500h2.500V4L8 6M10 5.500v2H7.500V9.500L5 7.500" stroke="#a6a6a6" fill="none" />
          </RoundIcon>
        </div>
        <div className="flex h-[171px]">
          <div className="flex w-[73px] shrink-0 flex-col pt-[3px] pl-[5px]">
            <span className="leading-[13px] tracking-[0.25px]">Sidechain</span>
            <div className={`${box} w-[73px] justify-between bg-[#202020] pr-[2px] pl-[1px] tracking-[0.2px] text-[#a0a0a0]`}>
              No Input <Tri />
            </div>
            <div className={`${box} mt-[3px] w-[73px]`} />
            <div className="flex w-[72px] flex-col items-center">
              <span className="mt-[5px] leading-[13px] tracking-[0.2px]">Gain</span>
              <Knob arc="half" needle="M14 13.500L8 3" />
              <span className="-mt-[2px] leading-[11px]">0.00 dB</span>
              <span className="mt-[2px] leading-[13px]">Mix</span>
              <Knob arc="full" needle="M14 13L20.500 24" />
              <span className="-mt-[2px] leading-[11px]">100 %</span>
            </div>
            <div className={`${box} mt-[5px] w-[73px] justify-center text-[#444]`}>Mute</div>
          </div>
          <div className="relative mt-[4px] ml-[12px] h-[163px] w-px bg-[#161616]">
            <svg className="absolute top-[75px] -left-[2px] bg-[#292929]" width="5" height="13">
              <path d="M1 3v7l4-3.500z" fill="#1a1a1a" />
            </svg>
          </div>
          <div className="ml-[7px] flex w-[140px] flex-col pt-[5px]">
            <div className="flex items-center">
              <RoundIcon>
                <path d="M3 9.500V4h2.500l1 1H10v1H5z" fill="#a6a6a6" />
                <path d="M3.500 9.500l1.700-3h5l-1.700 3z" fill="#a6a6a6" />
              </RoundIcon>
              <RoundIcon className="ml-[4px]">
                <path d="M3 3h6.500v6.500H3z" fill="#a6a6a6" />
                <path d="M4.500 3h4v2.500h-4z" fill="#333" />
              </RoundIcon>
              <div className={`${box} ml-[4px] w-[106px] pl-[1px] tracking-[0.15px]`}>Default</div>
            </div>
            <div className="mt-[5px] flex h-[125px] items-end rounded-[2px] bg-[#0c0c0c]">
              <div className="h-[13px] w-[13px] rounded-full border-2 border-[#8f500a]" />
            </div>
            <div className="mt-[5px] flex justify-between">
              <div className={`${box} w-[68px] pl-[1px] tracking-[0.1px]`}>none</div>
              <div className={`${box} w-[68px] pl-[1px] tracking-[0.1px]`}>none</div>
            </div>
          </div>
        </div>
      </div>
      <div className="flex w-[11px] items-start gap-px pt-[74px] pl-[3px]">
        {[12, 11].map((d, i) => (
          <div key={i} className="relative h-[40px] w-[2px] bg-[#0d0d0d]">
            <div className="absolute bottom-0 w-full bg-[#4a7a2c]" style={{ top: d }} />
            <div className="absolute h-px w-full bg-[#a6f05a]" style={{ top: d }} />
            <div className="absolute top-[18px] bottom-0 w-full bg-linear-to-b from-[#85ec50] to-[#0ff05c]" />
          </div>
        ))}
      </div>
      <div className="flex w-[1636px] items-center justify-center bg-[#292929] text-[10px] font-medium tracking-[0.12px] text-[#7a7a7a]">
        <span className="-mt-[2px]">Déposer ici un instrument ou échantillon</span>
      </div>
    </div>
  );
}

function StatusBar() {
  const mini = [
    [102, 2, 5], [102, 5, 5], [102, 8, 5], [102, 12, 6], [121, 12, 2], [125, 10, 2], [128, 3, 4], [129, 5, 6], [128, 9, 5],
    [128, 13, 6], [149, 4, 1], [149, 9, 1], [149, 13, 1], [154, 2, 5], [154, 5, 6], [155, 9, 4], [154, 13, 5], [172, 2, 1],
    [172, 5, 1], [172, 9, 1], [172, 13, 1], [178, 2, 5], [179, 4, 5], [178, 9, 22], [178, 13, 22],
  ];
  return (
    <div className="relative flex h-[36px] items-start pt-[8px]">
      <svg className="ml-[8px]" width="20" height="22">
        <circle cx="9.500" cy="10.500" r="9.500" fill="#1a1a1a" />
        <path d="M5 5v11l11-5.500z" fill="#2c2c2c" />
      </svg>
      <div className="ml-[7px] h-[22px] w-[1523px] rounded-[3px] bg-[#191919] p-[3px]">
        <div className="flex h-[16px] items-center bg-[#292929] pl-[7px] text-[10px] font-medium tracking-[0.15px] whitespace-pre text-[#8f8f8f]">
          <span className="w-[113px]">Sélection temporelle</span>
          <span className="w-[77px] tracking-[0px]">Début: 19.1.1</span>
          <span className="w-[62px] tracking-[0px]">Fin: 21.1.1</span>
          <span className="tracking-[-0.15px]">{"Longueur: 2.0.0  (Durée: 0:03:380)"}</span>
        </div>
      </div>
      <div className="ml-[8px] h-[22px] w-[206px] rounded-[3px] bg-[#191919] p-[3px]">
        <svg className="h-[16px] w-[200px] bg-[#292929]" width="200" height="16" shapeRendering="crispEdges">
          <rect x="102" width="50" height="16" fill="#323232" />
          {mini.map(([x, y, w], i) => (
            <rect key={i} x={x} y={y} width={w} height="1" fill="#191919" />
          ))}
          <rect x="125" width="1" height="16" fill="#fff" />
        </svg>
      </div>
      <div className="-mt-[8px] ml-[8px] flex h-[30px] w-[105px] items-center rounded-b-[3px] bg-[#181818] pt-[10px] pl-[4px] text-[10px] font-bold text-[#8f8f8f]">
        <span className="w-[74px] shrink-0 tracking-[-0.15px] whitespace-nowrap">6-Xpand!2_x64</span>
        <div className="-mt-[2px] ml-[3px] flex h-[16px] w-[20px] shrink-0 items-end justify-end border-t border-[#26363c] bg-[#222]">
          <div className="mb-[1px] h-[11px] w-[12px] bg-black" />
        </div>
      </div>
      <svg className="ml-[8px]" width="20" height="22">
        <circle cx="9.500" cy="10.500" r="9.500" fill="#1a1a1a" />
        <path d="M4 15h11L9.500 4z" fill="#2c2c2c" />
      </svg>
    </div>
  );
}

export default function App() {
  return (
    <div className="relative flex h-[1038px] w-[1919px] flex-col overflow-hidden bg-[#212121] font-['Inter',sans-serif] tabular-nums">
      <TitleBar />
      <MenuBar />
      <Toolbar />
      <div className="flex gap-[8px] pl-[9px]">
        <Browser />
        <Arrangement />
      </div>
      <DeviceView />
      <StatusBar />
      <div className="pointer-events-none absolute top-[51px] left-[4px] h-[751px] w-[425px] border-[5px] border-white" />
    </div>
  );
}
